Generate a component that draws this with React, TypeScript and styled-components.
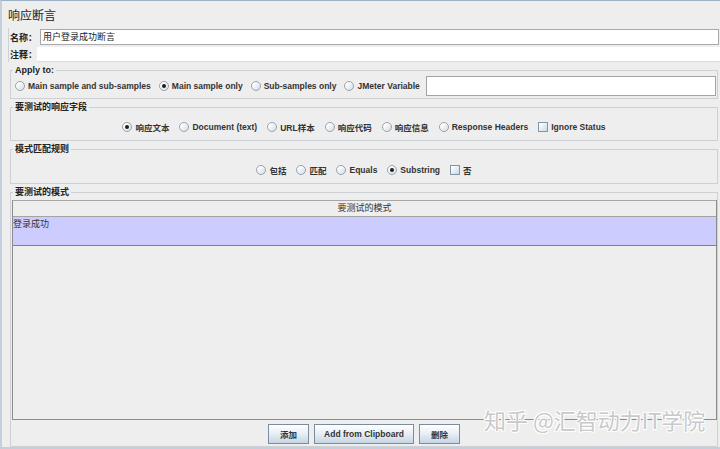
import React from "react";
import styled, { createGlobalStyle, css } from "styled-components";

const GlobalStyle = createGlobalStyle`
  html, body {
    margin: 0;
    padding: 0;
    background: #eeeeee;
  }
  body {
    font-family: "Liberation Sans", Arial, "Noto Sans CJK SC", sans-serif;
    color: #333333;
  }
  * {
    box-sizing: border-box;
  }
`;

const Frame = styled.div`
  position: relative;
  width: 720px;
  height: 449px;
  display: flex;
  flex-direction: column;
  overflow: hidden;
  border-top: 1px solid #9eb0c3;
  border-left: 2px solid #c3d0dc;
  border-bottom: 2px solid #c3d0dc;
`;

const Title = styled.div`
  height: 27px;
  padding: 3px 0 0 6px;
  font-size: 12px;
  line-height: 24px;
  color: #222;
`;

const NamePanel = styled.div`
  display: flex;
  flex-direction: column;
  gap: 2px;
  margin-left: 6px;
  padding-top: 1px;
  border-left: 1px solid #c9d1d9;
`;

const NameRow = styled.div`
  display: flex;
  align-items: center;
`;

const FieldLabel = styled.span<{ $width: number }>`
  width: ${(p) => p.$width}px;
  padding-left: 1px;
  font-size: 9px;
  font-weight: bold;
  color: #222;
  white-space: nowrap;
`;

const NameInput = styled.div`
  flex: 1;
  height: 16px;
  margin-right: 1px;
  padding-left: 2px;
  background: #fff;
  border: 1px solid #a9a9a9;
  font-size: 9px;
  line-height: 14px;
  color: #222;
`;

const CommentInput = styled.div`
  flex: 1;
  height: 15px;
  background: #fff;
  border-bottom: 1px solid #dcdcdc;
`;

const Group = styled.fieldset<{ $grow?: boolean }>`
  display: flex;
  flex-direction: column;
  margin: 3px 2px 0 8px;
  padding: 0;
  min-width: 0;
  border: 1px solid #cdd1d6;
  ${(p) =>
    p.$grow &&
    css`
      flex: 1;
      min-height: 0;
    `}
`;

const Legend = styled.legend`
  margin-left: 2px;
  padding: 0 2px;
  font-size: 9px;
  font-weight: bold;
  line-height: 10px;
  color: #222;
`;

const ApplyRow = styled.div`
  display: flex;
  align-items: center;
  gap: 6px;
  height: 20px;
  margin: 1px 1px 2px 4px;
`;

const OptionRow = styled.div<{ $top: number; $bottom: number }>`
  display: flex;
  align-items: center;
  justify-content: center;
  gap: 10px;
  height: 20px;
  margin: ${(p) => p.$top}px 0 ${(p) => p.$bottom}px;
`;

const Options = styled.div`
  display: flex;
  align-items: center;
  gap: 8px;
`;

const Option = styled.label`
  display: flex;
  align-items: center;
  gap: 3px;
  font-size: 8.5px;
  font-weight: bold;
  color: #333;
  white-space: nowrap;
`;

const Radio = styled.span<{ $checked?: boolean }>`
  display: inline-flex;
  align-items: center;
  justify-content: center;
  flex-shrink: 0;
  width: 10px;
  height: 10px;
  border-radius: 50%;
  border: 1px solid #98a3ae;
  background: linear-gradient(135deg, #ffffff 20%, #d3dce6);
  ${(p) =>
    p.$checked &&
    css`
      &::after {
        content: "";
        width: 4px;
        height: 4px;
        border-radius: 50%;
        background: #1e1e1e;
      }
    `}
`;

const Check = styled.span`
  flex-shrink: 0;
  width: 10px;
  height: 10px;
  border: 1px solid #8595a5;
  background: linear-gradient(135deg, #ffffff 10%, #c9d7e5);
`;

const VarInput = styled.div`
  flex: 1;
  height: 20px;
  background: #fff;
  border: 1px solid #a3a3a3;
`;

const Table = styled.div`
  flex: 1;
  display: flex;
  flex-direction: column;
  margin: 3px 0 0 1px;
  border: 1px solid #8c8c8c;
  border-top-color: #a6a6a6;
`;

const TableHeader = styled.div`
  height: 16px;
  border-bottom: 1px solid #a4a4a4;
  font-size: 9px;
  line-height: 15px;
  text-align: center;
  color: #333;
`;

const TableRow = styled.div<{ $selected?: boolean }>`
  height: 29px;
  padding: 1px 0 0 0;
  font-size: 9px;
  line-height: 12px;
  color: #333;
  background: ${(p) => (p.$selected ? "#ccccff" : "transparent")};
  border-bottom: 1px solid #7e7e9c;
`;

const TableBody = styled.div`
  flex: 1;
`;

const ButtonBar = styled.div`
  display: flex;
  justify-content: center;
  gap: 5px;
  height: 26px;
  padding-top: 4px;
`;

const Button = styled.button<{ $pad?: number }>`
  height: 20px;
  padding: 0 ${(p) => p.$pad ?? 11}px;
  border: 1px solid #7d8c9c;
  border-radius: 0;
  background: linear-gradient(#ffffff, #eaf0f6 45%, #c6d5e4);
  font-family: inherit;
  font-size: 8.5px;
  font-weight: bold;
  color: #333;
`;

const Watermark = styled.div`
  position: absolute;
  left: 482px;
  top: 406px;
  font-family: "Noto Sans CJK SC", "Noto Sans", sans-serif;
  font-size: 22px;
  line-height: 24px;
  color: #c9c9c9;
  white-space: nowrap;
  text-shadow: 1px 1px 0 #ffffff, -1px -1px 0 #ffffff, 1px -1px 0 #ffffff,
    -1px 1px 0 #ffffff;
`;

type Opt = { label: string; kind: "radio" | "check"; checked?: boolean };

const applyOptions: Opt[] = [
  { label: "Main sample and sub-samples", kind: "radio" },
  { label: "Main sample only", kind: "radio", checked: true },
  { label: "Sub-samples only", kind: "radio" },
  { label: "JMeter Variable", kind: "radio" },
];

const fieldOptions: Opt[] = [
  { label: "响应文本", kind: "radio", checked: true },
  { label: "Document (text)", kind: "radio" },
  { label: "URL样本", kind: "radio" },
  { label: "响应代码", kind: "radio" },
  { label: "响应信息", kind: "radio" },
  { label: "Response Headers", kind: "radio" },
  { label: "Ignore Status", kind: "check" },
];

const ruleOptions: Opt[] = [
  { label: "包括", kind: "radio" },
  { label: "匹配", kind: "radio" },
  { label: "Equals", kind: "radio" },
  { label: "Substring", kind: "radio", checked: true },
  { label: "否", kind: "check" },
];

const renderOption = (o: Opt) => (
  <Option key={o.label}>
    {o.kind === "radio" ? <Radio $checked={o.checked} /> : <Check />}
    {o.label}
  </Option>
);

export default function App() {
  return (
    <>
      <GlobalStyle />
      <Frame>
        <Title>响应断言</Title>

        <NamePanel>
          <NameRow>
            <FieldLabel $width={31}>名称：</FieldLabel>
            <NameInput>用户登录成功断言</NameInput>
          </NameRow>
          <NameRow>
            <FieldLabel $width={28}>注释：</FieldLabel>
            <CommentInput />
          </NameRow>
        </NamePanel>

        <Group>
          <Legend>Apply to:</Legend>
          <ApplyRow>
            <Options>{applyOptions.map(renderOption)}</Options>
            <VarInput />
          </ApplyRow>
        </Group>

        <Group>
          <Legend>要测试的响应字段</Legend>
          <OptionRow $top={5} $bottom={3}>
            {fieldOptions.map(renderOption)}
          </OptionRow>
        </Group>

        <Group>
          <Legend>模式匹配规则</Legend>
          <OptionRow $top={6} $bottom={3}>
            {ruleOptions.map(renderOption)}
          </OptionRow>
        </Group>

        <Group $grow>
          <Legend>要测试的模式</Legend>
          <Table>
            <TableHeader>要测试的模式</TableHeader>
            <TableRow $selected>登录成功</TableRow>
            <TableBody />
          </Table>
          <ButtonBar>
            <Button>添加</Button>
            <Button $pad={9}>Add from Clipboard</Button>
            <Button>删除</Button>
          </ButtonBar>
        </Group>

        <Watermark>知乎 @汇智动力IT学院</Watermark>
      </Frame>
    </>
  );
}
